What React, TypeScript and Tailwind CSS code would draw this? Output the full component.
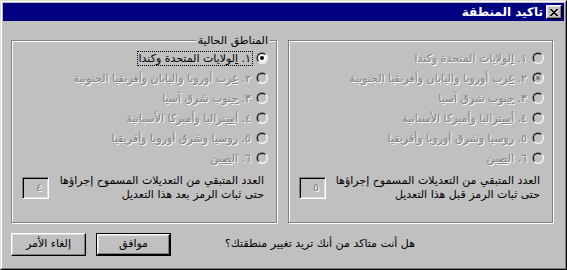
import React from 'react';

type Region = { num: string; before: string; key: string; after: string };

const regions: Region[] = [
  { num: '١', before: '', key: 'ا', after: 'لولايات المتحدة وكندا' },
  { num: '٢', before: '', key: 'غ', after: 'رب أوروبا واليابان وأفريقيا الجنوبية' },
  { num: '٣', before: '', key: 'ج', after: 'نوب شرق آسيا' },
  { num: '٤', before: 'أ', key: 'س', after: 'تراليا وأميركا الأسبانية' },
  { num: '٥', before: '', key: 'ر', after: 'وسيا وشرق أوروبا وأفريقيا' },
  { num: '٦', before: 'ال', key: 'ص', after: 'ين' },
];

const Radio: React.FC<{ checked?: boolean; disabled?: boolean }> = ({ checked, disabled }) => (
  <span className="flex h-3 w-3 shrink-0 rounded-full border border-t-[#808080] border-l-[#808080] border-r-white border-b-white">
    <span
      className={`flex flex-1 items-center justify-center rounded-full border border-t-black border-l-black border-r-[#dfdfdf] border-b-[#dfdfdf] ${
        disabled ? 'bg-[#c0c0c0]' : 'bg-white'
      }`}
    >
      {checked && <span className={`h-1 w-1 rounded-full ${disabled ? 'bg-[#808080]' : 'bg-black'}`} />}
    </span>
  </span>
);

const GroupBox: React.FC<{
  legend?: string;
  width: string;
  selected: number;
  allDisabled?: boolean;
  count: string;
  when: string;
}> = ({ legend, width, selected, allDisabled, count, when }) => (
  <div
    className={`relative flex h-[183px] flex-col border border-[#808080] pt-[7px] pr-[8px] pl-[10px] shadow-[inset_1px_1px_0_#fff,1px_1px_0_#fff] ${width}`}
  >
    {legend && (
      <span className="absolute -top-[7px] right-[6px] bg-[#c0c0c0] px-[2px] text-[11px] leading-[13px] text-black">
        {legend}
      </span>
    )}

    {/* Region options */}
    {regions.map((r, i) => {
      const enabled = !allDisabled && i === 0;
      const focused = !allDisabled && i === 0;
      return (
        <div key={r.num} className="flex h-5 items-center gap-[4px]">
          <Radio checked={i === selected} disabled={!enabled} />
          <span
            className={`px-[1px] text-[11px] leading-[13px] ${focused ? 'outline outline-1 outline-dotted outline-black' : ''} ${
              enabled ? 'text-black' : 'text-[#808080] [text-shadow:1px_1px_0_#fff]'
            }`}
          >
            {r.num}. {r.before}
            <span className="underline">{r.key}</span>
            {r.after}
          </span>
        </div>
      );
    })}

    {/* Remaining changes */}
    <div className="mt-[6px] flex items-center justify-between pr-[4px]">
      <p className="text-[11px] leading-[14px] text-black">
        العدد المتبقي من التعديلات المسموح إجراؤها
        <br />
        حتى ثبات الرمز {when} هذا التعديل
      </p>
      <div className="flex h-[22px] w-[27px] items-center border border-t-[#808080] border-l-[#808080] border-r-white border-b-white bg-[#c0c0c0] shadow-[inset_1px_1px_0_#000,inset_-1px_-1px_0_#dfdfdf]">
        <span className="w-full pr-[6px] text-right text-[11px] text-[#808080] [text-shadow:1px_1px_0_#fff]">
          {count}
        </span>
      </div>
    </div>
  </div>
);

const Button: React.FC<{ label: string; isDefault?: boolean }> = ({ label, isDefault }) => {
  const face = (
    <span className="flex h-full w-full items-center justify-center border border-t-white border-l-white border-r-black border-b-black bg-[#c0c0c0] text-[11px] text-black shadow-[inset_-1px_-1px_0_#808080,inset_1px_1px_0_#dfdfdf]">
      {label}
    </span>
  );
  return isDefault ? (
    <div className="h-[23px] w-[75px] border border-black">{face}</div>
  ) : (
    <div className="h-[23px] w-[75px]">{face}</div>
  );
};

export default function App() {
  return (
    <div
      dir="rtl"
      className="h-[270px] w-[567px] border border-t-[#dfdfdf] border-l-[#dfdfdf] border-r-black border-b-black bg-[#c0c0c0] font-['DejaVu_Sans',sans-serif]"
    >
      <div className="flex h-full flex-col border border-t-white border-l-white border-r-[#808080] border-b-[#808080] p-[1px]">
        {/* Title bar */}
        <div className="flex h-[18px] items-center gap-[3px] bg-[#000080] px-[2px]">
          <span className="flex h-[14px] w-[16px] items-center justify-center border border-t-white border-l-white border-r-black border-b-black bg-[#c0c0c0] shadow-[inset_-1px_-1px_0_#808080,inset_1px_1px_0_#dfdfdf]">
            <svg width="8" height="7" viewBox="0 0 8 7" shapeRendering="crispEdges">
              <path
                d="M0 0h2v1H0zM6 0h2v1H6zM1 1h2v1H1zM5 1h2v1H5zM2 2h4v1H2zM3 3h2v1H3zM2 4h4v1H2zM1 5h2v1H1zM5 5h2v1H5zM0 6h2v1H0zM6 6h2v1H6z"
                fill="#000"
              />
            </svg>
          </span>
          <span className="text-[12px] font-bold leading-none text-white">تاكيد المنطقة</span>
        </div>

        {/* Group boxes */}
        <div className="mt-[19px] flex gap-[11px] pr-[11px] pl-[8px]">
          <GroupBox width="w-[265px]" selected={1} allDisabled count="٥" when="قبل" />
          <GroupBox legend="المناطق الحالية" width="w-[266px]" selected={0} count="٤" when="بعد" />
        </div>

        {/* Footer */}
        <div dir="ltr" className="mt-[10px] flex items-center gap-[10px] pl-[8px]">
          <Button label="إلغاء الأمر" />
          <Button label="موافق" isDefault />
          <p dir="rtl" className="w-[234px] text-right text-[11px] text-black">
            هل أنت متاكد من أنك تريد تغيير منطقتك؟
          </p>
        </div>
      </div>
    </div>
  );
}
